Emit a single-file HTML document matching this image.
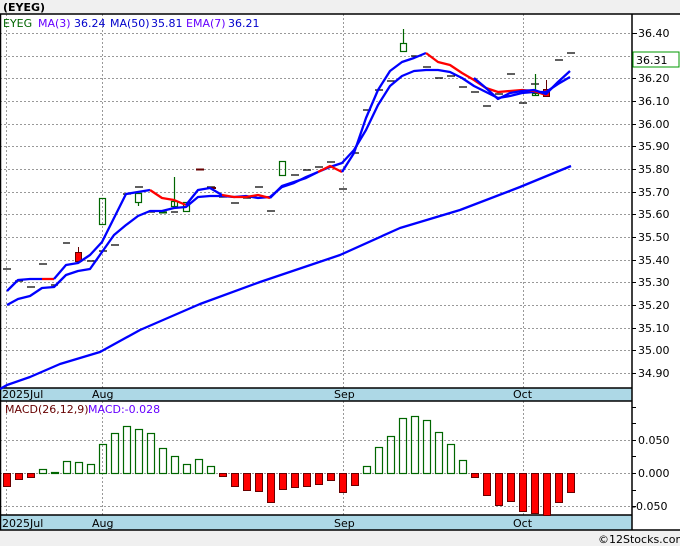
<!DOCTYPE html>
<html><head><style>
body{margin:0;background:#f0f0f0;width:680px;height:546px;overflow:hidden;font-family:"Liberation Sans","DejaVu Sans",sans-serif}
svg{position:absolute;left:0;top:0}
text{font-family:"DejaVu Sans","Liberation Sans",sans-serif;font-size:11px}
</style></head><body>
<svg width="680" height="546" viewBox="0 0 680 546">
<rect x="0" y="0" width="680" height="546" fill="#f0f0f0"/>
<text x="3" y="11" font-weight="bold" font-size="13" fill="#000">(EYEG)</text>
<rect x="0" y="14" width="632" height="374" fill="#fff"/>
<rect x="632" y="14" width="48" height="516" fill="#fff"/>
<rect x="0" y="401" width="632" height="114" fill="#fff"/>
<rect x="0" y="388" width="632" height="13" fill="#add8e6"/>
<rect x="0" y="515" width="632" height="15" fill="#add8e6"/>
<g stroke="#999" stroke-dasharray="2,2" stroke-width="1" fill="none">
<path d="M0 33.5H632M0 56.5H632M0 78.5H632M0 101.5H632M0 124.5H632M0 146.5H632M0 169.5H632M0 192.5H632M0 214.5H632M0 237.5H632M0 260.5H632M0 282.5H632M0 305.5H632M0 328.5H632M0 350.5H632M0 373.5H632"/>
<path d="M0 440.5H632M0 473.5H632M0 506.5H632"/>
<path d="M6.5 14V388M102.5 14V388M343.5 14V388M523.5 14V388M6.5 401V515M102.5 401V515M343.5 401V515M523.5 401V515"/>
</g>
<g stroke="#000" stroke-width="1.5" fill="none">
<path d="M0 14H680M632 14V530M0 388H632M0 401H632M0 515H632M0 530H680M0.5 14V530"/>
</g>
<g stroke="#000" stroke-width="1">
<path d="M632 33.5h5M632 56.5h4M632 78.5h4M632 101.5h4M632 124.5h4M632 146.5h4M632 169.5h4M632 192.5h4M632 214.5h4M632 237.5h4M632 260.5h4M632 282.5h4M632 305.5h4M632 328.5h4M632 350.5h4M632 373.5h4M632 407.5h4M632 423.5h4M632 440.5h4M632 456.5h4M632 473.5h4M632 490.5h4M632 506.5h4"/>
</g>
<g fill="#000" font-size="11">
<text x="638" y="37">36.40</text>
<text x="638" y="82">36.20</text><text x="638" y="105">36.10</text><text x="638" y="128">36.00</text>
<text x="638" y="150">35.90</text><text x="638" y="173">35.80</text>
<text x="638" y="196">35.70</text><text x="638" y="218">35.60</text>
<text x="638" y="241">35.50</text><text x="638" y="264">35.40</text>
<text x="638" y="286">35.30</text><text x="638" y="309">35.20</text>
<text x="638" y="332">35.10</text><text x="638" y="354">35.00</text><text x="638" y="377">34.90</text>
<text x="638" y="444">0.050</text><text x="638" y="477">0.000</text><text x="632" y="510">-0.050</text>
</g>
<rect x="633" y="52" width="46" height="15" fill="#fff" stroke="#090" stroke-width="1"/>
<text x="636" y="64" fill="#000">36.31</text>
<text x="3" y="27" fill="#060">EYEG</text>
<text x="38" y="27" fill="#60f">MA(3)</text><text x="74" y="27" fill="#00c">36.24</text>
<text x="110" y="27" fill="#00c">MA(50)</text><text x="151" y="27" fill="#00c">35.81</text>
<text x="186" y="27" fill="#60f">EMA(7)</text><text x="228" y="27" fill="#00c">36.21</text>
<text x="5" y="413" fill="#600">MACD(26,12,9)</text><text x="88" y="413" fill="#60f">MACD:-0.028</text>
<g fill="#000">
<text x="2" y="398">2025Jul</text><text x="92" y="398">Aug</text><text x="334" y="398">Sep</text><text x="513" y="398">Oct</text>
<text x="2" y="527">2025Jul</text><text x="92" y="527">Aug</text><text x="334" y="527">Sep</text><text x="513" y="527">Oct</text>
<text x="598" y="543">©12Stocks.com</text>
</g>
<g stroke="#000" stroke-width="1.3">
<path d="M3 269h8M15 281h8M27 287h8M39 264h8M51 285h7M63 243h7M87 261h8M99 251h8M111 245h8M123 194h8M135 187h8M147 212h8M159 212h8M171 212h7M207 187h8M219 197h8M231 203h8M243 198h8M255 187h8M267 211h8M291 175h8M303 170h8M315 167h8M327 162h8M339 189h8M351 153h8M363 110h8M375 90h8M387 81h8M411 56h8M423 67h8M435 78h8M447 76h8M459 87h8M471 92h8M483 106h8M495 94h8M507 74h8M519 103h8M531 84h8M555 60h8M567 53h8"/>
</g>
<path d="M196 169.5h8" stroke="#600" stroke-width="2"/>
<path d="M208 188h8" stroke="#600" stroke-width="2"/>
<g fill="none" stroke="#060" stroke-width="1.2">
<rect x="99.5" y="198.5" width="6" height="26"/>
<rect x="135.5" y="193.5" width="6" height="9"/><path d="M138.5 202v4"/>
<path d="M174.5 177v29"/><rect x="171.5" y="201.5" width="6" height="5"/>
<rect x="183.5" y="202.5" width="6" height="9"/>
<rect x="279.5" y="161.5" width="6" height="14"/>
<path d="M403.5 29v14"/><rect x="400.5" y="43.5" width="6" height="8"/>
<path d="M535.5 74v21"/><rect x="532.5" y="93.5" width="6" height="2"/>
</g>
<path d="M159 212.5h8" stroke="#060" stroke-width="2"/>
<path d="M78.5 247v6" stroke="#600"/><rect x="75.5" y="252.5" width="6" height="9" fill="#f00" stroke="#600"/>
<path d="M546.5 80v9" stroke="#600"/><rect x="543.5" y="89.5" width="6" height="7" fill="#f00" stroke="#600"/>
<g fill="none" stroke-width="2.3" stroke-linejoin="round">
<polyline stroke="#00f" points="0,389 7,385 30,377 60,364 100,352 140,330 200,304 260,282 340,255 400,228 460,210 520,187 571,166"/>
<polyline stroke="#00f" points="7,305 18,299 30,296 42,288 54,287 66,275 78,271 90,269 102,252 114,235 126,225 138,216 150,211 162,211 174,208 186,207 198,197 210,196 222,196 234,197 246,196 258,198 270,197 282,187 294,183 306,177 318,172 330,167 342,163 354,150 366,130 378,105 390,86 402,76 414,71 426,70 438,70 450,72 462,78 474,86 486,92 498,98 510,96 522,93 534,92 546,92 558,84 570,77"/>
<polyline stroke="#00f" points="7,291 18,280 30,279 42,279"/>
<polyline stroke="#f00" points="42,279 54,279"/>
<polyline stroke="#00f" points="54,279 66,265 78,263 90,255 102,242 114,218 126,194 150,190"/>
<polyline stroke="#f00" points="150,190 162,198 174,200 186,205"/>
<polyline stroke="#00f" points="186,205 198,190 210,188 222,195"/>
<polyline stroke="#f00" points="222,195 234,197 246,197 258,195 270,198"/>
<polyline stroke="#00f" points="270,198 282,186 294,182 306,178 318,172"/>
<polyline stroke="#f00" points="318,172 330,166 342,172"/>
<polyline stroke="#00f" points="342,172 354,153 366,118 378,90 390,71 402,62 414,58 426,53"/>
<polyline stroke="#f00" points="426,53 438,62 450,65 462,73 474,80 486,88 498,92 510,91 522,90 534,91 546,95"/>
<polyline stroke="#00f" points="474,78 486,88 498,99 510,93 522,91 534,90 546,94 558,82 570,71"/>
</g>
<g fill="none" stroke="#060" stroke-width="1.2">
<rect x="39.5" y="469.5" width="7" height="4"/>
<rect x="51.5" y="472.5" width="7" height="1"/>
<rect x="63.5" y="461.5" width="7" height="12"/>
<rect x="75.5" y="462.5" width="7" height="11"/>
<rect x="87.5" y="464.5" width="7" height="9"/>
<rect x="99.5" y="444.5" width="7" height="29"/>
<rect x="111.5" y="433.5" width="7" height="40"/>
<rect x="123.5" y="426.5" width="7" height="47"/>
<rect x="135.5" y="429.5" width="7" height="44"/>
<rect x="147.5" y="433.5" width="7" height="40"/>
<rect x="159.5" y="448.5" width="7" height="25"/>
<rect x="171.5" y="456.5" width="7" height="17"/>
<rect x="183.5" y="464.5" width="7" height="9"/>
<rect x="195.5" y="459.5" width="7" height="14"/>
<rect x="207.5" y="466.5" width="7" height="7"/>
<rect x="363.5" y="466.5" width="7" height="7"/>
<rect x="375.5" y="447.5" width="7" height="26"/>
<rect x="387.5" y="436.5" width="7" height="37"/>
<rect x="399.5" y="418.5" width="7" height="55"/>
<rect x="411.5" y="416.5" width="7" height="57"/>
<rect x="423.5" y="420.5" width="7" height="53"/>
<rect x="435.5" y="432.5" width="7" height="41"/>
<rect x="447.5" y="444.5" width="7" height="29"/>
<rect x="459.5" y="460.5" width="7" height="13"/>
</g>
<g fill="#f00" stroke="#600" stroke-width="1">
<rect x="3.5" y="473.5" width="7" height="13"/>
<rect x="15.5" y="473.5" width="7" height="6"/>
<rect x="27.5" y="473.5" width="7" height="4"/>
<rect x="219.5" y="473.5" width="7" height="3"/>
<rect x="231.5" y="473.5" width="7" height="13"/>
<rect x="243.5" y="473.5" width="7" height="17"/>
<rect x="255.5" y="473.5" width="7" height="18"/>
<rect x="267.5" y="473.5" width="7" height="29"/>
<rect x="279.5" y="473.5" width="7" height="16"/>
<rect x="291.5" y="473.5" width="7" height="14"/>
<rect x="303.5" y="473.5" width="7" height="13"/>
<rect x="315.5" y="473.5" width="7" height="11"/>
<rect x="327.5" y="473.5" width="7" height="7"/>
<rect x="339.5" y="473.5" width="7" height="19"/>
<rect x="351.5" y="473.5" width="7" height="12"/>
<rect x="471.5" y="473.5" width="7" height="4"/>
<rect x="483.5" y="473.5" width="7" height="22"/>
<rect x="495.5" y="473.5" width="7" height="32"/>
<rect x="507.5" y="473.5" width="7" height="28"/>
<rect x="519.5" y="473.5" width="7" height="38"/>
<rect x="531.5" y="473.5" width="7" height="40"/>
<rect x="543.5" y="473.5" width="7" height="42"/>
<rect x="555.5" y="473.5" width="7" height="29"/>
<rect x="567.5" y="473.5" width="7" height="19"/>
</g>
</svg>
</body></html>
